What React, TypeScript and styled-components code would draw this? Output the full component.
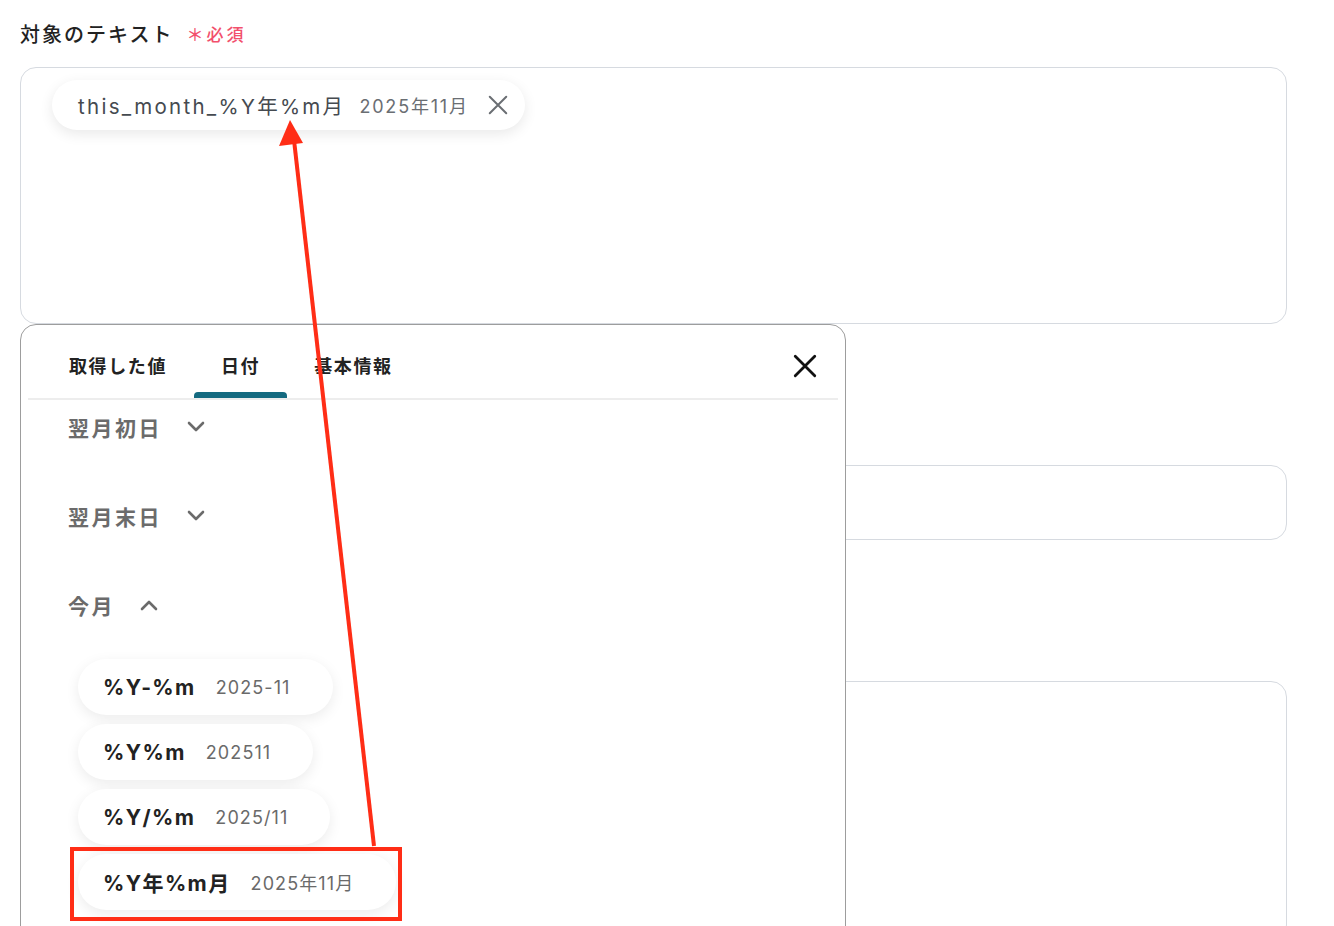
import React from 'react'
import styled, { createGlobalStyle } from 'styled-components'

const GlobalStyle = createGlobalStyle`
  html, body {
    margin: 0;
    padding: 0;
    background: #fff;
  }
  body {
    font-family: Inter, "Noto Sans CJK JP", sans-serif;
    color: #222;
  }
`

const Page = styled.div`
  position: relative;
  height: 926px;
  overflow: hidden;
  padding: 18px 47px 0 20px;
  box-sizing: border-box;
`

const Field = styled.div<{ $gap?: number }>`
  display: flex;
  flex-direction: column;
  margin-top: ${({ $gap }) => $gap || 0}px;
`

const Label = styled.div`
  display: flex;
  align-items: center;
  gap: 13px;
  height: 30px;
  margin-bottom: 19px;
  font-size: 20px;
  font-weight: 500;
  color: #222;
  letter-spacing: 2px;
`

const Required = styled.span`
  font-size: 17px;
  color: #f2506c;
  letter-spacing: 3px;
`

const Box = styled.div<{ $height: number }>`
  height: ${({ $height }) => $height}px;
  border: 1px solid #d6dae0;
  border-radius: 16px;
  box-sizing: border-box;
  padding: 12px 31px;
  background: #fff;
`

const TokenChip = styled.div`
  display: inline-flex;
  align-items: center;
  height: 50px;
  padding: 0 16px 0 26px;
  border-radius: 25px;
  background: #fff;
  box-shadow: 0 4px 14px rgba(0, 0, 0, 0.09);
  box-sizing: border-box;
`

const TokenName = styled.span`
  font-size: 20.5px;
  color: #454a50;
  letter-spacing: 2.3px;
`

const TokenValue = styled.span`
  margin-left: 14px;
  font-size: 18px;
  color: #6a6e73;
  letter-spacing: 1.8px;
`

const IconButton = styled.span`
  display: flex;
  margin-left: 18px;
`

const Panel = styled.div`
  position: absolute;
  left: 20px;
  top: 324px;
  width: 826px;
  height: 700px;
  border: 1.5px solid #9d9d9d;
  border-radius: 16px;
  background: #fff;
  box-sizing: border-box;
  padding: 0 7px;
`

const TabBar = styled.div`
  display: flex;
  align-items: stretch;
  height: 73px;
  border-bottom: 2px solid #ededed;
  padding-left: 14px;
  position: relative;
`

const Tab = styled.div<{ $active?: boolean }>`
  position: relative;
  display: flex;
  align-items: center;
  padding: 6px 27px 0;
  font-size: 18px;
  font-weight: 600;
  color: #222;
  letter-spacing: 1.6px;

  &::after {
    content: '';
    display: ${({ $active }) => ($active ? 'block' : 'none')};
    position: absolute;
    left: 0;
    right: 0;
    bottom: 0;
    height: 6px;
    border-radius: 4px 4px 0 0;
    background: #146a80;
  }
`

const CloseButton = styled.span`
  position: absolute;
  right: 20px;
  top: 28px;
  display: flex;
`

const Sections = styled.div`
  display: flex;
  flex-direction: column;
  padding-left: 40px;
`

const SectionHeader = styled.div<{ $space: number }>`
  display: flex;
  align-items: center;
  gap: 25px;
  height: 30px;
  margin-top: ${({ $space }) => $space}px;
  font-size: 21px;
  font-weight: 600;
  color: #6b6b6b;
  letter-spacing: 2.5px;
`

const Options = styled.div`
  display: flex;
  flex-direction: column;
  align-items: flex-start;
  gap: 9px;
  margin-top: 39px;
  padding-left: 10px;
`

const OptionChip = styled.div`
  display: inline-flex;
  align-items: center;
  height: 56px;
  padding: 0 42px 0 25px;
  border-radius: 28px;
  background: #fff;
  box-shadow: 0 4px 14px rgba(0, 0, 0, 0.08);
  box-sizing: border-box;
`

const OptionFormat = styled.span`
  font-size: 21px;
  font-weight: 700;
  color: #222;
  letter-spacing: 1.4px;
`

const OptionValue = styled.span`
  margin-left: 20px;
  font-size: 18px;
  color: #6a6a6a;
  letter-spacing: 1.1px;
`

const Overlay = styled.svg`
  position: absolute;
  left: 0;
  top: 0;
  pointer-events: none;
`

const Chevron = ({ up }: { up?: boolean }) => (
  <svg width="18" height="12" viewBox="0 0 18 12">
    <path
      d={up ? 'M2 10 L9 3 L16 10' : 'M2 2 L9 9 L16 2'}
      fill="none"
      stroke="#6b6b6b"
      strokeWidth="2.6"
      strokeLinecap="round"
      strokeLinejoin="round"
    />
  </svg>
)

const Cross = ({ size, color, width }: { size: number; color: string; width: number }) => (
  <svg width={size} height={size} viewBox="0 0 24 24">
    <path d="M3 3 L21 21 M21 3 L3 21" stroke={color} strokeWidth={width} strokeLinecap="round" />
  </svg>
)

const formats = [
  { format: '%Y-%m', value: '2025-11' },
  { format: '%Y%m', value: '202511' },
  { format: '%Y/%m', value: '2025/11' },
  { format: '%Y年%m月', value: '2025年11月' },
]

const App = () => (
  <>
    <GlobalStyle />
    <Page>
      <Field>
        <Label>
          対象のテキスト <Required>＊必須</Required>
        </Label>
        <Box $height={257}>
          <TokenChip>
            <TokenName>this_month_%Y年%m月</TokenName>
            <TokenValue>2025年11月</TokenValue>
            <IconButton>
              <Cross size={22} color="#6a6e73" width={2.2} />
            </IconButton>
          </TokenChip>
        </Box>
      </Field>
      {/* the labels of these two fields sit under the picker panel */}
      <Field $gap={92}>
        <Label />
        <Box $height={75} />
      </Field>
      <Field $gap={92}>
        <Label />
        <Box $height={260} />
      </Field>

      <Panel>
        <TabBar>
          <Tab>取得した値</Tab>
          <Tab $active>日付</Tab>
          <Tab>基本情報</Tab>
          <CloseButton>
            <Cross size={26} color="#111" width={2.6} />
          </CloseButton>
        </TabBar>
        <Sections>
          <SectionHeader $space={12}>
            翌月初日 <Chevron />
          </SectionHeader>
          <SectionHeader $space={59}>
            翌月末日 <Chevron />
          </SectionHeader>
          <SectionHeader $space={59}>
            今月 <Chevron up />
          </SectionHeader>
          <Options>
            {formats.map((f) => (
              <OptionChip key={f.format}>
                <OptionFormat>{f.format}</OptionFormat>
                <OptionValue>{f.value}</OptionValue>
              </OptionChip>
            ))}
          </Options>
        </Sections>
      </Panel>

      <Overlay width="1334" height="926" viewBox="0 0 1334 926">
        <line x1="374" y1="846" x2="294" y2="140" stroke="#ff2d16" strokeWidth="4" />
        <polygon points="290,120 279,146 303,143" fill="#ff2d16" />
        <rect x="72" y="849" width="328" height="70" fill="none" stroke="#ff2d16" strokeWidth="4" />
      </Overlay>
    </Page>
  </>
)

export default App
